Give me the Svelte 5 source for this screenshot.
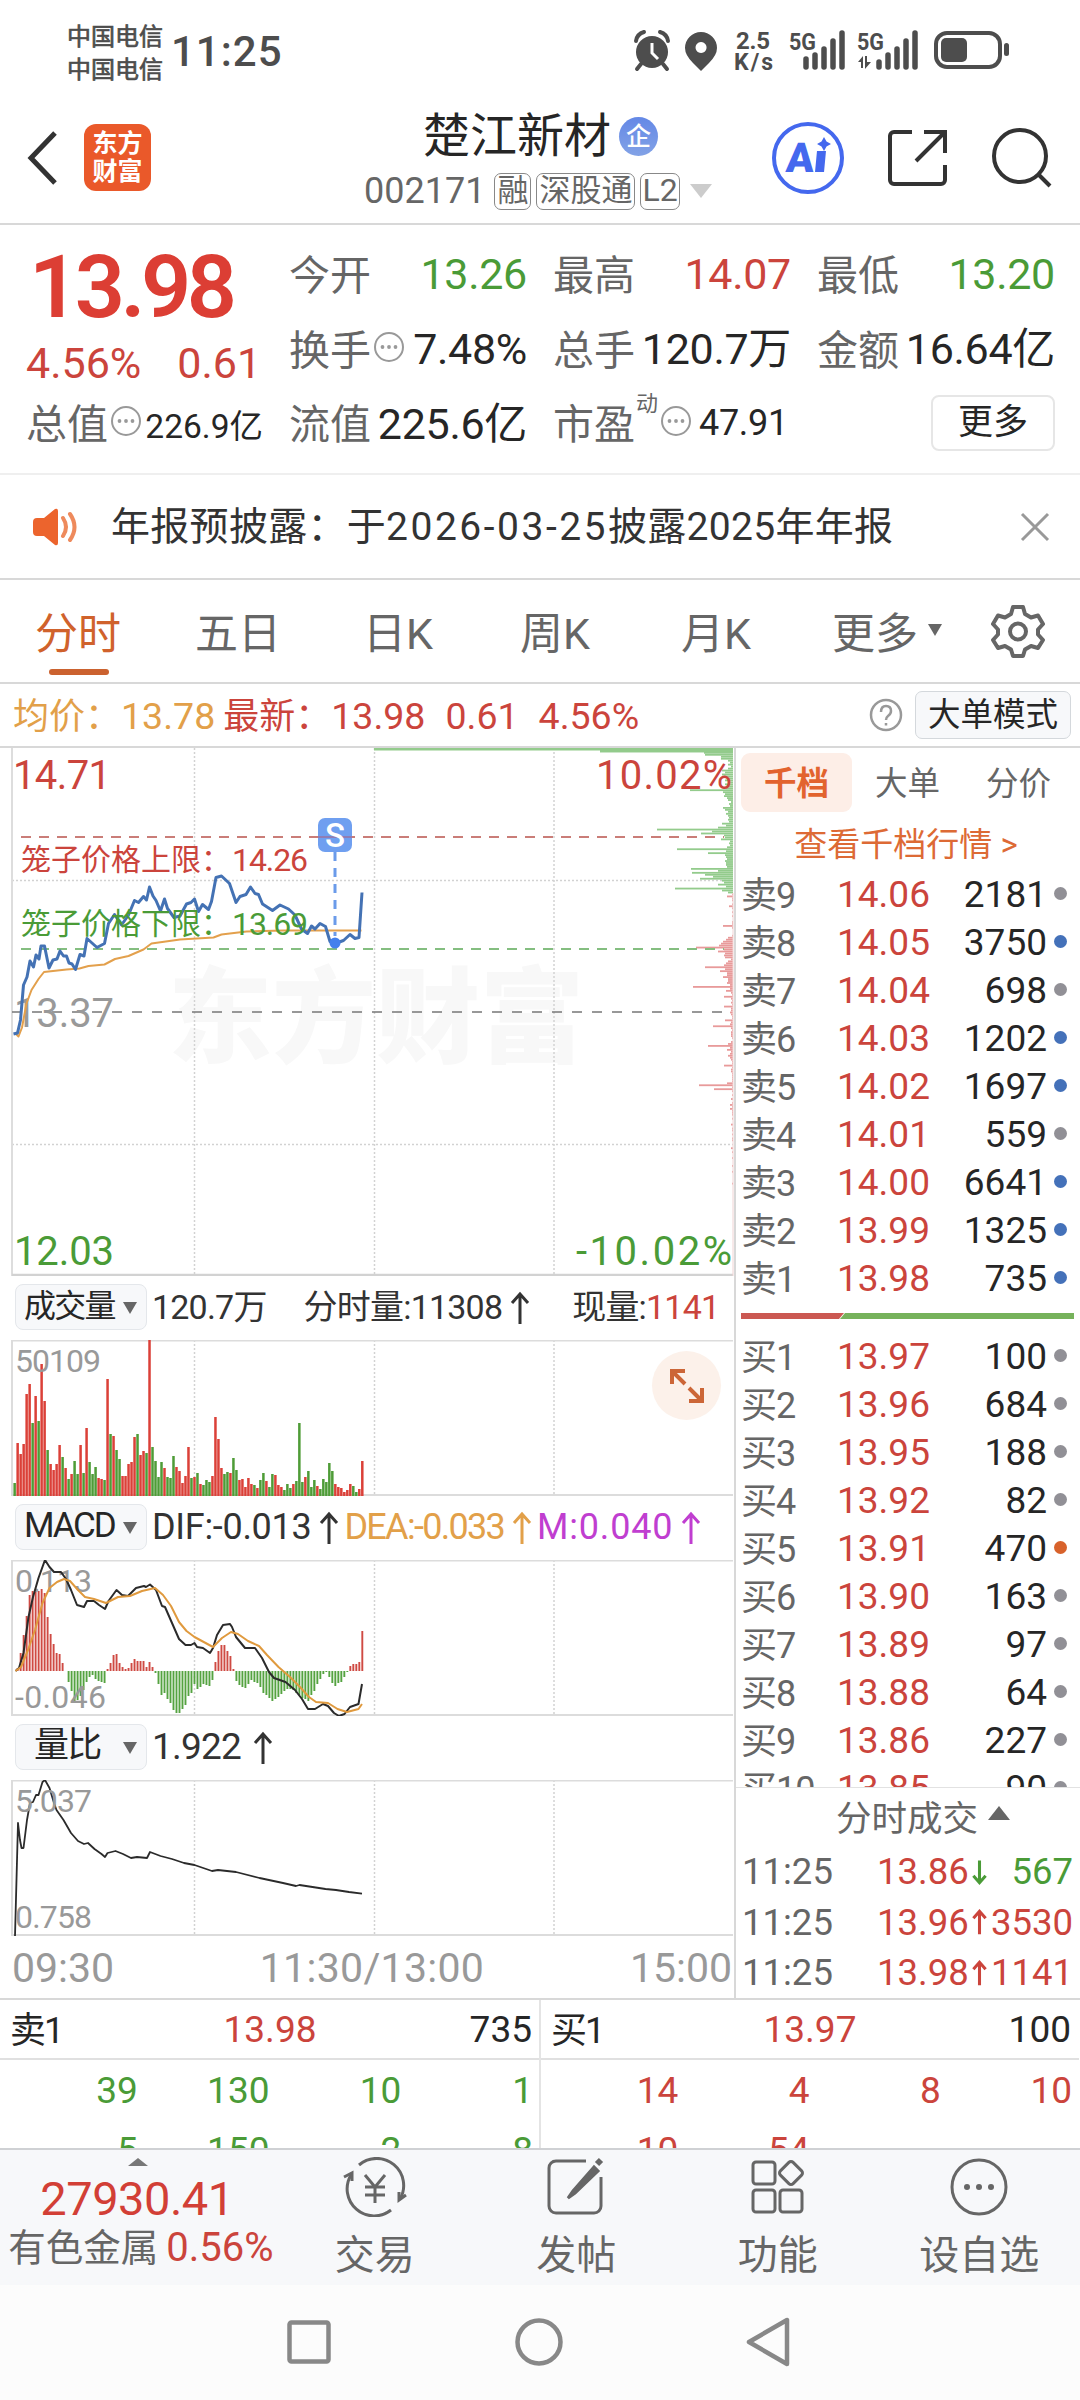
<script>
  const tabs = ['分时', '五日', '日K', '周K', '月K']
  const sells = [
    [9, '14.06', 2181, 'gray'], [8, '14.05', 3750, 'blue'], [7, '14.04', 698, 'gray'],
    [6, '14.03', 1202, 'blue'], [5, '14.02', 1697, 'blue'], [4, '14.01', 559, 'gray'],
    [3, '14.00', 6641, 'blue'], [2, '13.99', 1325, 'blue'], [1, '13.98', 735, 'blue']
  ]
  const buys = [
    [1, '13.97', 100, 'gray'], [2, '13.96', 684, 'gray'], [3, '13.95', 188, 'gray'],
    [4, '13.92', 82, 'gray'], [5, '13.91', 470, 'orange'], [6, '13.90', 163, 'gray'],
    [7, '13.89', 97, 'gray'], [8, '13.88', 64, 'gray'], [9, '13.86', 227, 'gray'],
    [10, '13.85', 90, 'gray']
  ]
  const trades = [
    ['11:25', '13.86', 567, 'down'],
    ['11:25', '13.96', 3530, 'up'],
    ['11:25', '13.98', 1141, 'up']
  ]
  const queues = [
    { label: '卖1', price: '13.98', qty: 735, cls: 'green', rows: [[39, 130, 10, 1], [5, 150, 2, 8]] },
    { label: '买1', price: '13.97', qty: 100, cls: 'red', rows: [[14, 4, 8, 10], [10, 54, '', '']] }
  ]

  const price = '13.5,286 17.5,285 20.5,272 23.5,237 27,229 30,213 33.5,219 36,207 39,211 41,198 44.5,198 49,220 53,212 57,211 60,203 63.5,208 66.5,208 69,215 72,216 75.5,221.5 80,206.5 84,208 87,190.5 92,195 97,199.5 104.5,195.5 108.5,175.5 114.5,166.5 121.5,177 128.5,167 134.5,152.5 138.5,154.5 143.5,148.5 146.5,152 149.5,139 153,148 156,152.5 160.5,163 164.5,151 167.5,160.5 174,169.5 180,168 186.5,156 191,154.5 194.5,151 198.5,163.5 202.5,156.5 208.5,161.5 211.5,153.5 216,129.5 221.5,128 229.5,135.5 236,154.5 240,148.5 246,146.5 250.5,139 255,145.5 258.5,146.5 262.5,156 272.5,162.5 280,157 288.5,161 295,167 301.5,181 307.5,185.5 311.5,178 315,181 320,175.5 325.5,178.5 330,193.5 335,195.5 343.5,192.5 350,186.5 355,190.5 359,189.5 362,144.5'
  const average = '16,286 18.5,288.5 22,279.5 26.5,255.5 31.5,242 38.5,231 44,224 66.5,221.5 79.5,220.5 88.5,218 104.5,216.5 115,211 128.5,208 143.5,201.5 151.5,195.5 180,191.5 213.5,189.5 221.5,186.5 246.5,183.5 283.5,182.5 361.5,182.5'
  const dif = '15.5,111 19,108 23.5,93 28.5,57 33,37 38.5,18 45,0 49.5,7 54,12 61,12 66,19 71,30 77,45 84,47 87,41 94,41 99,45 105,49 108.5,41 116.5,30 122,35 128,36 136,28 144,26 146,27 150,24.5 156,30 162,46 165,47 172,63 179,79 185.5,85 191,85 194.5,83 197,87 203,88 210,93 213,88 217,75 223,65 230,64 232,67 236,77 245,88 255,88 262,98 269,112 274,118 285.5,122 295,130 302,139 308,149 315,149 323,144 328,146 334,153 339,156 344.5,154 350,147 358.5,144 362,124'
  const dea = '15.5,111 21,107 28,90 35,70 42.5,43 49.5,28 57,22 64,19 70,21 78,30 85,37 94,39 106,43 118,37 130,36 142,31 155,28 163,35 171,46 179,62 186.5,71 194.5,77 213,87 222,78 231,72 238,74 248,81 259,86 267,95 278.5,107 290,117 300,127 309,137 316,142 328,143 337.5,149 347,152 358.5,149 362,144'
  const ratio = '15,156 18,43 20,60 21.5,68 23.5,68 27,40 30,23 33,22 36,15 38.5,15 42.5,2 45,0 49.5,8 54,23 56.5,30 63.5,40 71,53 78,61 84,64 88,63 94.5,69 101.5,74 105,77 107.5,73 115.5,71 123,74 131,78 137,77 147,78 150,72 160.5,76 172,79 184,83 194.5,85 212,91 218,90 236,92 259.5,98 283,103 296,106 299.5,105 325.5,109 336,110 349,112 362,113.7'

  // positive = up minute, negative = down minute
  const volume = [-13, 53, 42, 52, 102, 112, -73, 100, -75, 132, 95, -46, 32, 26, 32, 51, -39, 28, -17, 22, -35, -22, 51, -23, 68, -34, -22, -29, 18, 17, -16, 117, -62, 60, -46, -37, 20, 20, 32, 34, 59, -62, 41, 45, -43, 156, -49, -35, -19, -34, 28, -19, -18, -40, 29, 25, 13, 20, 49, -18, 19, -23, 12, -11, -16, -14, 20, 79, 57, 28, -22, -24, 23, -38, -26, 16, 17, 9, 18, 12, -11, 8, -16, -23, 15, -9, -22, 21, 11, 9, -6, -12, -8, 12, -15, -73, -14, 19, -25, -9, -16, 10, -7, -17, -14, -33, -25, 12, 9, 8, 4, 6, 12, -10, -4, 7, 35]
  const macd = [0, 3, 18, 36, 55, 76, 80, 79, 80, 82, 78, 54, 37, 27, 18, 17, 8, 0, -11, -20, -30, -29, -25, -19, -11, -6, -4, -8, -10, -11, -12, 2, 8, 16, 17, 8, 4, 2, 3, 8, 12, 10, 10, 10, 4, 9, 4, -2, -13, -24, -22, -28, -32, -39, -42, -42, -38, -34, -25, -22, -13, -18, -16, -13, -14, -15, -9, 9, 20, 26, 26, 20, 15, 2, -10, -14, -16, -17, -13, -9, -11, -12, -16, -22, -24, -27, -30, -28, -26, -23, -20, -18, -18, -19, -22, -24, -27, -28, -30, -24, -20, -13, -8, -3, -1, -6, -12, -15, -12, -11, -6, -1, 5, 7, 7, 9, 40]

  // order depth along the right edge, one entry per tick
  const askDepth = [359, 133, 29, 28, 12, 12, 5, 3, 5, 2, 5, 11, 8, 11, 9, 5, 8, 5, 8, 6, 7, 43, 10, 8, 9, 6, 5, 2, 4, 3, 10, 8, 5, 7, 5, 4, 5, 4, 11, 7, 15, 76, 21, 32, 9, 8, 12, 3, 4, 3, 6, 56, 7, 25, 8, 7, 6, 8, 7, 7, 6, 42, 15, 41, 28, 20, 33, 11, 9, 15, 7, 58, 11, 5]
  const bidDepth = [1, 6, 1, 1, 0, 1, 4, 1, 0, 1, 0, 1, 0, 0, 1, 1, 10, 1, 0, 0, 0, 1, 5, 7, 10, 12, 14, 37, 9, 15, 8, 9, 8, 2, 5, 7, 9, 28, 8, 13, 6, 6, 10, 5, 5, 6, 3, 40, 3, 7, 2, 1, 9, 2, 1, 2, 1, 9, 2, 2, 3, 2, 1, 1, 8, 2, 3, 20, 2, 1, 2, 2, 2, 1, 0, 2, 5, 25, 3, 6, 2, 3, 5, 3, 2, 1, 1, 9, 1, 2, 2, 1, 1, 1, 1, 1, 6, 34, 1, 19, 1, 0, 1, 0, 2, 0, 1, 3, 1, 3, 1, 1, 1, 0, 1, 0, 0, 2, 0, 1, 1, 0, 1, 0, 1, 1, 0, 0, 0, 2, 0, 1, 0, 0, 1, 0, 0, 0, 1, 0, 0, 1, 0, 0, 0, 0, 0, 1]
  const tick = 1.967
  const minuteX = (i) => 13.4 + i * 2.997
</script>

{#snippet more()}
  <svg class="more-dot" viewBox="0 0 32 32"><circle cx="16" cy="16" r="14" /><circle class="p" cx="9.5" cy="16" r="1.9" /><circle class="p" cx="16" cy="16" r="1.9" /><circle class="p" cx="22.5" cy="16" r="1.9" /></svg>
{/snippet}

{#snippet arrow(down)}
  <svg class="arrow" viewBox="0 0 20 34">
    {#if down}<path d="M10 2v29M2 22l8 9 8-9" />{:else}<path d="M10 33V3M2 12l8-9 8 9" />{/if}
  </svg>
{/snippet}

{#snippet grid()}
  <path class="dots" d="M194.5 0V600M374.5 0V600M554 0V600" />
{/snippet}

<main>
  <div class="status">
    <div class="carrier"><span>中国电信</span><span>中国电信</span></div>
    <div class="clock">11:25</div>
    <svg class="status-icons" width="380" height="48" viewBox="0 0 380 48">
      <circle cx="20" cy="24" r="16" />
      <path class="l" d="M4 13Q5 6 12 4M36 13Q35 6 28 4M9 36l-4 5M31 36l4 5" />
      <path d="M20 15v10l6 6" stroke="#fff" stroke-width="3" fill="none" />
      <path d="M69 4a16 16 0 0 1 16 16q0 7-8 15l-8 8-8-8q-8-8-8-15A16 16 0 0 1 69 4zm0 10a5.500 5.500 0 1 0 .1 0z" fill-rule="evenodd" />
      <text x="104" y="21" font-size="24" textLength="34">2.5</text>
      <text x="102" y="42" font-size="23" textLength="39">K/s</text>
      <text x="157" y="22" font-size="24" textLength="27" lengthAdjust="spacingAndGlyphs">5G</text>
      <path class="b" d="M174 31v8M183 27v12M192 21v18M201 13v26M210 5v34" />
      <text x="225" y="22" font-size="24" textLength="27" lengthAdjust="spacingAndGlyphs">5G</text>
      <path class="b" d="M247 34v5M256 27v12M265 21v18M274 13v26M283 5v34" />
      <path d="M226 34l5-6v12h-2v-6zM233 28h2v6h4l-6 7z" />
      <rect x="304" y="5" width="64" height="34" rx="11" fill="none" stroke="#4d4d4d" stroke-width="4" />
      <rect x="309" y="10" width="26" height="24" rx="5" />
      <rect x="372" y="15" width="5" height="13" rx="2.500" />
    </svg>
  </div>

  <header>
    <svg class="back" width="34" height="56" viewBox="0 0 34 56"><path d="M29 3 5 28l24 25" /></svg>
    <div class="logo"><span>东方</span><span>财富</span></div>
    <div class="title">
      <div class="name">楚江新材<span class="badge">企</span></div>
      <div class="code">002171 <i>融</i><i>深股通</i><i class="l2">L2</i><b class="caret"></b></div>
    </div>
    <svg class="head-icons" width="284" height="76" viewBox="0 0 284 76">
      <circle cx="36" cy="38" r="34" fill="none" stroke="#4468ee" stroke-width="4" />
      <text x="13" y="52" font-size="41" font-weight="900" fill="#4468ee" transform="skewX(-4) translate(4 0)">A</text>
      <path d="M45 31h9l-2 21h-9z" fill="#4468ee" />
      <path d="M52 17l2.500 4.500L59 24l-4.500 2.500L52 31l-2.500-4.500L45 24l4.500-2.500z" fill="#4468ee" />
      <path class="k" d="M140 12h-18a4 4 0 0 0-4 4v44a4 4 0 0 0 4 4h47a4 4 0 0 0 4-4V45M152 12h21v21M172 13l-28 28" />
      <circle class="k" cx="248" cy="36" r="26" /><path class="k" d="M267 55l11 11" />
    </svg>
  </header>

  <section class="quote">
    <div class="last"><strong>13.98</strong><p><span>4.56%</span><span>0.61</span></p></div>
    <div><label>今开</label><em class="green">13.26</em></div>
    <div><label>最高</label><em class="red">14.07</em></div>
    <div><label>最低</label><em class="green">13.20</em></div>
    <div><label>换手</label>{@render more()}<em>7.48%</em></div>
    <div><label>总手</label><em class="cn">120.7万</em></div>
    <div><label>金额</label><em class="cn">16.64亿</em></div>
    <div><label>总值</label>{@render more()}<em class="small">226.9亿</em></div>
    <div><label>流值</label><em class="cn">225.6亿</em></div>
    <div><label>市盈<sup>动</sup></label>{@render more()}<em class="pe">47.91</em></div>
    <div><button class="more">更多</button></div>
  </section>

  <section class="notice">
    <svg width="46" height="38" viewBox="0 0 46 38">
      <path d="M4 10h7L22 1q3-1 3 2v32q0 3-3 2L11 28H4q-4 0-4-4V14q0-4 4-4z" fill="#ec642d" />
      <path d="M30 10q6 9 0 18M37 6q9 13 0 26" fill="none" stroke="#ee8a5c" stroke-width="4" stroke-linecap="round" />
    </svg>
    <p>年报预披露：于<span class="date">2026-03-25</span>披露2025年年报</p>
    <svg class="close" width="30" height="30" viewBox="0 0 30 30"><path d="M2 2l26 26M28 2 2 28" /></svg>
  </section>

  <nav>
    {#each tabs as tab, i}
      <span class:active={i === 0}>{tab}</span>
    {/each}
    <span class="tab-more">更多<b></b></span>
    <svg width="54" height="54" viewBox="0 0 54 54">
      <path d="M22 3h10l2 7 6 3.500 7-2 5 8.500-5 5.500v5L52 36l-5 8-7-2-6 3.500-2 6.500H22l-2-6.500L14 42l-7 2-5-8 5-5.500v-5L2 20l5-8.500 7 2 6-3.500z" />
      <circle cx="27" cy="27.500" r="8" />
    </svg>
  </nav>

  <div class="avg">
    <span class="gold">均价：<u>13.78</u></span>
    <span class="red">最新：<u>13.98</u><u>0.61</u><u>4.56%</u></span>
    <svg width="34" height="34" viewBox="0 0 34 34"><circle cx="17" cy="17" r="15" /><path d="M12 14q0-6 5-6t5 5q0 3-3 5-2 1.500-2 4M17 25v2.500" /></svg>
    <button>大单模式</button>
  </div>

  <div class="body">
    <div class="charts">
      <svg class="chart" width="734" height="528" viewBox="0 0 734 528">
        <text x="168" y="307" font-size="104" font-weight="900" fill="#f8f8f8" textLength="416">东方财富</text>
        {@render grid()}
        <path class="dots" d="M12 132.500H733M12 396.500H733" />
        <path d="M12 0V529" stroke="#ddd" stroke-width="2" />
        <path d="M12 527H733" stroke="#d2d2d2" stroke-width="2.500" />
        {#each askDepth as w, i}
          <rect x={733 - w} y={i * tick} width={w} height={i < 2 ? 2.5 : 1.8} fill="#93cb8c" />
        {/each}
        {#each bidDepth as w, i}
          <rect x={733 - w} y={(askDepth.length + i) * tick} width={w} height="1.8" fill="#e89a9a" />
        {/each}
        <path d="M733 145V529" stroke="#f0d4d4" />
        <path d="M12 264H724" stroke="#777" stroke-width="1.600" stroke-dasharray="10 10" />
        <path d="M21 89H724" stroke="#b9534c" stroke-width="1.500" stroke-dasharray="10 8" />
        <path d="M21 201H724" stroke="#84be80" stroke-width="2" stroke-dasharray="10 8" />
        <text class="t40 red" x="13" y="41" textLength="98">14.71</text>
        <text class="t40 red" x="596" y="41" textLength="136">10.02%</text>
        <text class="t40 gray" x="14" y="279" textLength="100">13.37</text>
        <text class="t40 green" x="14" y="517" textLength="100">12.03</text>
        <text class="t40 green" x="576" y="517" textLength="156">-10.02%</text>
        <polyline points={average} stroke="#e3a04c" stroke-width="2" />
        <polyline points={price} stroke="#4472b4" stroke-width="3" />
        <text class="t30 red" x="21" y="122">笼子价格上限：</text><text class="t32 red" x="232" y="123" textLength="76">14.26</text>
        <text class="t30 green" x="21" y="186">笼子价格下限：</text><text class="t32 green" x="232" y="187" textLength="76">13.69</text>
        <path d="M335 104V188" stroke="#6b9bea" stroke-width="3" stroke-dasharray="9 7" />
        <circle cx="335" cy="195" r="5.500" fill="#4480ec" />
        <rect x="318" y="70" width="34" height="34" rx="7" fill="#6f9ff0" />
        <path d="M318 89H352" stroke="#9a72a0" stroke-width="1.500" />
        <text x="335" y="99" font-size="33" font-weight="500" fill="#fff" text-anchor="middle">S</text>
      </svg>

      <div class="ind">
        <button>成交量<b></b></button>
        <span>120.7万</span><span class="min">分时量:11308{@render arrow()}</span><span class="now">现量:<i class="red">1141</i></span>
      </div>
      <div class="sub">
        <svg class="chart" width="734" height="156" viewBox="0 0 734 156">
          {@render grid()}
          <path class="frame" d="M733 .5H12V155H733" />
          {#each volume as v, i}
            <rect x={minuteX(i)} y={156 - Math.abs(v)} width="2.5" height={Math.abs(v)} fill={v > 0 ? '#db4038' : '#4e9c37'} />
          {/each}
          <text class="t32 gray" x="15" y="32" textLength="86">50109</text>
        </svg>
        <div class="expand">
          <svg width="36" height="36" viewBox="0 0 36 36"><path d="M3 16V3h13M3 3l13 13M33 20v13H20M33 33 20 20" /></svg>
        </div>
      </div>

      <div class="ind macd">
        <button>MACD<b></b></button>
        <span>DIF:-0.013{@render arrow()}</span><span class="gold">DEA:-0.033{@render arrow()}</span><span class="purple">M:0.040{@render arrow()}</span>
      </div>
      <div class="sub">
        <svg class="chart" width="734" height="156" viewBox="0 0 734 156">
          {@render grid()}
          <path class="frame" d="M733 .5H12V155H733" />
          {#each macd as v, i}
            <rect x={minuteX(i) + 0.3} y={v > 0 ? 111 - v : 111} width="1.9" height={Math.abs(v)} fill={v > 0 ? '#cf4a43' : '#55a341'} />
          {/each}
          <text class="t32 gray" x="15" y="32" textLength="77">0.113</text>
          <text class="t32 gray" x="15" y="148" textLength="91">-0.046</text>
          <polyline points={dif} stroke="#2b2b2b" stroke-width="2" />
          <polyline points={dea} stroke="#e09a3e" stroke-width="2" />
        </svg>
      </div>

      <div class="ind ratio">
        <button>量比<b></b></button>
        <span>1.922{@render arrow()}</span>
      </div>
      <div class="sub">
        <svg class="chart" width="734" height="156" viewBox="0 0 734 156">
          {@render grid()}
          <path class="frame" d="M733 .5H12V155H733" />
          <polyline points={ratio} stroke="#2b2b2b" stroke-width="1.800" />
          <text class="t32 gray" x="15" y="32" textLength="77">5.037</text>
          <text class="t32 gray" x="15" y="148" textLength="77">0.758</text>
        </svg>
      </div>
      <div class="axis"><span>09:30</span><span class="noon">11:30/13:00</span><span>15:00</span></div>
    </div>

    <aside>
      <div class="book-tabs"><span class="on">千档</span><span>大单</span><span>分价</span></div>
      <div class="link">查看千档行情 &gt;</div>
      <div class="book">
        {#each sells as [n, p, q, dot]}
          <div class="row"><span>卖{n}</span><em>{p}</em><strong>{q}</strong><i class={dot}></i></div>
        {/each}
      </div>
      <svg class="balance" width="333" height="6" viewBox="0 0 333 6"><path d="M0 0h103l-5 6H0z" fill="#cb5852" /><path d="M104 0h229v6H99z" fill="#76b25b" /></svg>
      <div class="book buy">
        {#each buys as [n, p, q, dot]}
          <div class="row"><span>买{n}</span><em>{p}</em><strong>{q}</strong><i class={dot}></i></div>
        {/each}
      </div>
      <div class="deals">
        <h3>分时成交<b></b></h3>
        {#each trades as [t, p, q, dir]}
          <div class="deal {dir}"><span>{t}</span><em>{p}</em>{@render arrow(dir === 'down')}<strong>{q}</strong></div>
        {/each}
      </div>
    </aside>
  </div>

  <div class="queues">
    {#each queues as side}
      <div class="queue">
        <div class="top"><span>{side.label}</span><em>{side.price}</em><strong>{side.qty}</strong></div>
        {#each side.rows as row}
          <div class="nums {side.cls}">{#each row as n}<span>{n}</span>{/each}</div>
        {/each}
      </div>
    {/each}
  </div>

  <footer>
    <div class="index">
      <b></b>
      <strong>27930.41</strong>
      <p>有色金属<em>0.56%</em></p>
    </div>
    <div class="item">
      <svg width="64" height="60" viewBox="0 0 64 60">
        <path d="M16 8A27 27 0 0 1 57 42M48 53A27 27 0 0 1 8 18" />
        <path d="M1 20l8-4v8M63 38l-7 5v-8" />
        <path d="M22 18l10 12 10-12M32 30v16M22 30h20M22 38h20" />
      </svg>
      <span>交易</span>
    </div>
    <div class="item">
      <svg width="64" height="60" viewBox="0 0 64 60">
        <path d="M42 4H12a7 7 0 0 0-7 7v38a7 7 0 0 0 7 7h38a7 7 0 0 0 7-7V20" />
        <path d="M50 10 29 34l-5 7 7-5L54 14z" fill="#666" /><path d="M53 7l4-4" stroke-width="6" />
      </svg>
      <span>发帖</span>
    </div>
    <div class="item">
      <svg width="64" height="60" viewBox="0 0 64 60">
        <rect x="7" y="5" width="22" height="22" rx="3" /><rect x="7" y="33" width="22" height="22" rx="3" /><rect x="34" y="33" width="22" height="22" rx="3" />
        <rect x="36" y="7" width="18" height="18" rx="3" transform="rotate(45 45 16)" />
      </svg>
      <span>功能</span>
    </div>
    <div class="item">
      <svg width="64" height="60" viewBox="0 0 64 60">
        <circle cx="32" cy="30" r="27" />
        <circle class="f" cx="20" cy="30" r="3" /><circle class="f" cx="32" cy="30" r="3" /><circle class="f" cx="44" cy="30" r="3" />
      </svg>
      <span>设自选</span>
    </div>
  </footer>

  <div class="sysnav">
    <svg width="50" height="50" viewBox="0 0 50 50"><rect x="5.500" y="5.500" width="39" height="39" rx="2" /></svg>
    <svg width="50" height="50" viewBox="0 0 50 50"><circle cx="25" cy="25" r="21.500" /></svg>
    <svg width="50" height="50" viewBox="0 0 50 50"><path d="M43 3v44L5 25z" /></svg>
  </div>
</main>

<style>
  :global(body) {
    background: #fff;
  }

  main {
    width: 1080px;
    height: 2400px;
    overflow: hidden;
    display: flex;
    flex-direction: column;
    font-family: Roboto, "Noto Sans CJK SC", sans-serif;
    color: #262626;
    background: #fff;
  }

  main > * {
    flex: none;
    box-sizing: border-box;
  }

  svg {
    display: block;
    flex: none;
  }

  em, i, u {
    font-style: normal;
    text-decoration: none;
  }

  p, h3 {
    margin: 0;
  }

  button {
    font: inherit;
    color: #262626;
    padding: 0;
    box-sizing: border-box;
  }

  .red { color: #cb443c; fill: #cb443c; }
  .green { color: #4a9b37; fill: #4a9b37; }
  .gray { fill: #999; }
  .gold { color: #e2a049; }
  .purple { color: #c03ed0; }

  /* status bar */
  .status {
    height: 92px;
    padding: 20px 68px 0 67px;
    display: flex;
    color: #4d4d4d;
  }

  .carrier {
    display: flex;
    flex-direction: column;
    width: 104px;
    padding-top: 1px;
    font-size: 24px;
    line-height: 33px;
    -webkit-text-stroke: .7px #4d4d4d;
  }

  .clock {
    font-size: 42px;
    font-weight: 500;
    line-height: 64px;
    letter-spacing: 1px;
  }

  .status-icons {
    margin: 8px 0 0 auto;
    fill: #4d4d4d;
    font-weight: 700;
  }

  .status-icons .l, .status-icons .b {
    stroke: #4d4d4d;
    stroke-width: 4;
    stroke-linecap: round;
    fill: none;
  }

  .status-icons .b {
    stroke-width: 5.500;
  }

  /* header */
  header {
    height: 133px;
    display: flex;
    align-items: center;
    padding: 0 24px 0 26px;
    border-bottom: 2px solid #d8d8d8;
  }

  .back {
    fill: none;
    stroke: #333;
    stroke-width: 5;
  }

  .logo {
    width: 67px;
    height: 67px;
    margin-left: 24px;
    border-radius: 12px;
    background: #ea592a;
    color: #fff;
    font-size: 25px;
    font-weight: 700;
    line-height: 28px;
    display: flex;
    flex-direction: column;
    align-items: center;
    justify-content: center;
  }

  .title {
    margin: 5px 0 0 213px;
    width: 360px;
  }

  .name {
    display: flex;
    align-items: center;
    margin: 2px 0 0 59px;
    font-size: 47px;
    line-height: 60px;
  }

  .badge {
    width: 39px;
    height: 39px;
    margin-left: 8px;
    border-radius: 50%;
    background: linear-gradient(#6488e6, #82a2e6);
    color: #fff;
    font-size: 25px;
    font-weight: 500;
    line-height: 39px;
    text-align: center;
  }

  .code {
    display: flex;
    align-items: center;
    font-size: 36px;
    line-height: 50px;
    color: #666;
  }

  .code i {
    height: 35px;
    margin-left: 5px;
    padding: 0 2px;
    border: 1.500px solid #888;
    border-radius: 7px;
    font-size: 31px;
    line-height: 33px;
  }

  .code i:first-of-type {
    margin-left: 9px;
  }

  .code .l2 {
    padding: 0 1px;
    font-size: 32px;
  }

  .caret {
    margin-left: 10px;
    border: 11px solid transparent;
    border-top: 14px solid #ccc;
    border-bottom: 0;
  }

  .head-icons {
    margin-left: auto;
  }

  .head-icons .k {
    fill: none;
    stroke: #333;
    stroke-width: 4;
  }

  /* quote summary */
  .quote {
    height: 250px;
    padding: 12px 0 0 26px;
    border-bottom: 2px solid #efefef;
    display: grid;
    grid-template-columns: 237px 238px 238px 238px;
    grid-template-rows: repeat(3, 74.500px);
    column-gap: 26px;
    font-size: 43px;
  }

  .quote > div {
    display: flex;
    align-items: center;
    white-space: nowrap;
  }

  .quote .last {
    grid-row: span 2;
    flex-direction: column;
    align-items: flex-start;
    color: #cb443c;
  }

  .last strong {
    margin-left: 3px;
    font-size: 88px;
    font-weight: 600;
    line-height: 99px;
    letter-spacing: -4.500px;
    color: #dc3e34;
  }

  .last p {
    display: flex;
    gap: 36px;
    line-height: 54px;
  }

  label {
    position: relative;
    top: -2px;
    font-size: 41px;
    color: #666;
  }

  sup {
    position: absolute;
    left: 83px;
    top: 0;
    font-size: 22px;
    line-height: 26px;
  }

  .quote em {
    margin-left: auto;
    letter-spacing: -.3px;
  }

  .quote .cn {
    margin-top: -7px;
  }

  .quote .small {
    font-size: 33.500px;
    letter-spacing: 0;
  }

  .quote .pe {
    font-size: 36px;
    margin-left: 7px;
  }

  .more-dot {
    width: 32px;
    height: 32px;
    margin: -4px 0 0 2px;
    fill: none;
    stroke: #999;
    stroke-width: 2;
  }

  label:has(sup) + .more-dot {
    margin-left: 25px;
  }

  .more-dot .p {
    fill: #999;
    stroke: none;
  }

  .more {
    width: 124px;
    height: 56px;
    margin-left: auto;
    border: 2px solid #e6e6e6;
    border-radius: 8px;
    background: #fff;
    font-size: 35px;
    line-height: 50px;
  }

  /* notice */
  .notice {
    height: 105px;
    padding: 0 30px 0 33px;
    border-bottom: 2px solid #d8d8d8;
    display: flex;
    align-items: center;
    font-size: 39px;
    color: #333;
  }

  .notice p {
    margin: -7px 0 0 32px;
    letter-spacing: .3px;
  }

  .date {
    letter-spacing: 2.500px;
  }

  .close {
    margin-left: auto;
    stroke: #999;
    stroke-width: 3;
  }

  /* period tabs */
  nav {
    height: 104px;
    padding-left: 35px;
    border-bottom: 2px solid #d8d8d8;
    display: grid;
    grid-template-columns: 160px 168px 157px 161px 151px 159px 54px;
    align-items: center;
    font-size: 43px;
    color: #666;
  }

  nav span {
    position: relative;
    margin-top: -3px;
  }

  nav .active {
    color: #d0622c;
  }

  .active::after {
    content: "";
    position: absolute;
    left: 14px;
    bottom: -14px;
    width: 60px;
    height: 6px;
    border-radius: 3px;
    background: #cb622f;
  }

  .tab-more {
    display: flex;
    align-items: center;
  }

  .tab-more b {
    margin-left: 10px;
    border: 7.500px solid transparent;
    border-top: 12px solid #666;
    border-bottom: 0;
  }

  nav svg {
    fill: none;
    stroke: #666;
    stroke-width: 4;
    stroke-linejoin: round;
  }

  .avg {
    height: 64px;
    padding: 0 9px 0 13px;
    border-bottom: 2px solid #d8d8d8;
    display: flex;
    align-items: center;
    font-size: 36px;
    white-space: nowrap;
  }

  .avg span {
    margin-top: -5px;
  }

  .avg span + span {
    margin-left: 8px;
  }

  .avg u {
    font-size: 37.500px;
    margin-right: 20px;
  }

  .avg u:last-child {
    margin-right: 0;
  }

  .avg svg {
    margin-left: auto;
    fill: none;
    stroke: #999;
    stroke-width: 2.500;
  }

  .avg button {
    width: 156px;
    height: 48px;
    margin-left: 12px;
    border: 1.500px solid #d4d8dc;
    border-radius: 7px;
    background: #f7f8fa;
    font-size: 32.500px;
    line-height: 44px;
  }

  /* charts */
  .body {
    height: 1250px;
    display: flex;
  }

  .charts {
    width: 734px;
    flex: none;
  }

  .chart polyline {
    fill: none;
    stroke-linejoin: round;
  }

  .dots {
    stroke: #d2d2d2;
    stroke-width: 1.500;
    stroke-dasharray: 2 2;
  }

  .frame {
    fill: none;
    stroke: #dcdcdc;
    stroke-width: 2;
  }

  .t40 { font-size: 40px; }
  .t32 { font-size: 32px; }
  .t30 { font-size: 30px; }

  .ind {
    height: 64px;
    padding: 0 0 2px 15px;
    box-sizing: border-box;
    display: flex;
    align-items: center;
    font-size: 34px;
    letter-spacing: -.8px;
    line-height: 44px;
    color: #333;
    white-space: nowrap;
  }

  .ind button {
    width: 132px;
    height: 46px;
    margin-right: 5px;
    padding: 0 9px 2px 8px;
    display: flex;
    align-items: center;
    justify-content: space-between;
    border: 1.500px solid #e4e7eb;
    border-radius: 8px;
    background: #f7f8fa;
    font-size: 32px;
    letter-spacing: -1.700px;
  }

  .ind button b {
    margin-top: 3px;
    border: 7.500px solid transparent;
    border-top: 12px solid #666;
    border-bottom: 0;
  }

  .ind span {
    display: flex;
    align-items: center;
    margin-top: -1px;
  }

  .ind .min {
    margin-left: 37px;
  }

  .ind .now {
    margin-left: 42px;
  }

  .arrow {
    width: 20px;
    height: 34px;
    margin-left: 8px;
    fill: none;
    stroke: currentColor;
    stroke-width: 3;
  }

  .ind .arrow {
    margin-top: 3px;
  }

  .macd {
    font-size: 36px;
    letter-spacing: -.3px;
  }

  .macd span + span {
    margin-left: 5px;
  }

  .macd .gold {
    letter-spacing: -1.700px;
  }

  .macd .purple {
    letter-spacing: .8px;
  }

  .macd button {
    font-size: 35px;
    letter-spacing: -2.200px;
  }

  .ratio {
    font-size: 37px;
  }

  .ratio button {
    padding-left: 18px;
    font-size: 35px;
  }

  .ratio .arrow {
    margin-left: 12px;
  }

  .sub {
    position: relative;
  }

  .expand {
    position: absolute;
    left: 652px;
    top: 11px;
    width: 69px;
    height: 69px;
    border-radius: 50%;
    background: #fcf1ea;
    display: flex;
    align-items: center;
    justify-content: center;
  }

  .expand path {
    fill: none;
    stroke: #cc6637;
    stroke-width: 4;
  }

  .axis {
    height: 63px;
    padding: 0 2px 0 12px;
    display: flex;
    align-items: center;
    justify-content: space-between;
    font-size: 41px;
    color: #999;
  }

  .noon {
    letter-spacing: .3px;
  }

  /* order book */
  aside {
    flex: 1;
    min-width: 0;
    border-left: 2px solid #d8d8d8;
    padding-left: 5px;
    display: flex;
    flex-direction: column;
  }

  .book-tabs {
    height: 59px;
    margin-top: 5px;
    display: flex;
    font-size: 32.500px;
    line-height: 62px;
    text-align: center;
    color: #666;
  }

  .book-tabs span {
    width: 111px;
  }

  .book-tabs .on {
    border-radius: 9px;
    background: #fdeee7;
    color: #e2632e;
    font-weight: 700;
  }

  .link {
    height: 58px;
    padding: 4px 9px 0 0;
    box-sizing: border-box;
    font-size: 33px;
    line-height: 58px;
    text-align: center;
    color: #dd6a35;
  }

  .row {
    height: 48px;
    display: flex;
    align-items: center;
    font-size: 37px;
    padding-top: 1px;
    box-sizing: border-box;
  }

  .row span {
    width: 96px;
    margin-top: -5px;
    font-size: 36px;
    color: #666;
    letter-spacing: -1px;
  }

  .row em {
    width: 92px;
    color: #cb443c;
  }

  .row strong {
    width: 118px;
    text-align: right;
    font-weight: 400;
  }

  .row i {
    width: 13px;
    height: 13px;
    margin: -3px 0 0 7px;
    border-radius: 50%;
    background: #919096;
  }

  .row .blue { background: #4471b9; }
  .row .orange { background: #d8622b; }

  .balance {
    margin: 11px 0 13px;
  }

  .buy {
    height: 458px;
    overflow: hidden;
  }

  .deals {
    margin-left: -5px;
    border-top: 1.500px solid #e2e2e2;
    font-size: 36.500px;
  }

  h3 {
    height: 59px;
    box-sizing: border-box;
    display: flex;
    align-items: center;
    padding: 0 0 4px 100px;
    font-size: 35.500px;
    font-weight: 400;
    color: #666;
  }

  h3 b {
    margin: -4px 0 0 10px;
    border: 11px solid transparent;
    border-bottom: 14px solid #666;
    border-top: 0;
  }

  .deal {
    height: 50.500px;
    padding: 0 7px 0 6px;
    display: flex;
    align-items: center;
    color: #cb443c;
  }

  .deal span {
    width: 135px;
    color: #666;
  }

  .deal .arrow {
    width: 17px;
    height: 26px;
    margin-left: 2px;
    stroke-width: 4;
  }

  .deal strong {
    margin-left: auto;
    font-weight: 400;
  }

  .down .arrow, .down strong {
    color: #4a9b37;
  }

  /* queue detail */
  .queues {
    height: 150px;
    overflow: hidden;
    border-top: 2px solid #d8d8d8;
    display: flex;
    font-size: 37px;
  }

  .queue {
    width: 540px;
    box-sizing: border-box;
    flex: none;
  }

  .queue + .queue {
    border-left: 2px solid #e4e4e4;
    margin-left: -1px;
  }

  .top {
    height: 60px;
    padding: 0 8px 0 10px;
    box-sizing: border-box;
    border-bottom: 2px solid #e0e0e0;
    display: grid;
    grid-template-columns: 1fr 1fr 1fr;
    align-items: center;
  }

  .top span {
    margin-top: -5px;
    letter-spacing: -2px;
    font-size: 36px;
  }

  .top em {
    padding-right: 2px;
    text-align: center;
    color: #cb443c;
  }

  .top strong {
    text-align: right;
    font-weight: 400;
  }

  .nums {
    height: 60px;
    padding: 0 7px 0 6px;
    display: grid;
    grid-template-columns: repeat(4, 1fr);
    align-items: center;
    text-align: right;
  }

  /* bottom bar */
  footer {
    height: 137px;
    border-top: 2px solid #cfd1d4;
    background: #f7f8fa;
    display: flex;
    color: #666;
  }

  .index {
    width: 274px;
    display: flex;
    flex-direction: column;
    align-items: center;
  }

  .index b {
    margin: 8px 0 0 2px;
    border: 10px solid transparent;
    border-bottom: 8px solid #777;
    border-top: 0;
  }

  .index strong {
    margin-top: 6px;
    font-size: 47px;
    line-height: 54px;
    font-weight: 400;
    letter-spacing: -.5px;
    color: #d23f36;
  }

  .index p {
    font-size: 37.500px;
    line-height: 56px;
    margin-right: -8px;
    margin-top: -6px;
  }

  .index em {
    margin-left: 8px;
    font-size: 40px;
    color: #cb443c;
  }

  .item {
    flex: 1;
    padding-top: 7px;
    display: flex;
    flex-direction: column;
    align-items: center;
    font-size: 40px;
  }

  .item svg {
    fill: none;
    stroke: #666;
    stroke-width: 3;
  }

  .item .f {
    fill: #666;
    stroke: none;
  }

  .item span {
    margin-top: 12px;
    line-height: 54px;
  }

  .sysnav {
    flex: 1;
    padding: 0 286px 2px 284px;
    background: #fcfcfc;
    display: flex;
    align-items: center;
    justify-content: space-between;
  }

  .sysnav svg {
    fill: none;
    stroke: #888;
    stroke-width: 4.500;
    stroke-linejoin: round;
  }
</style>
